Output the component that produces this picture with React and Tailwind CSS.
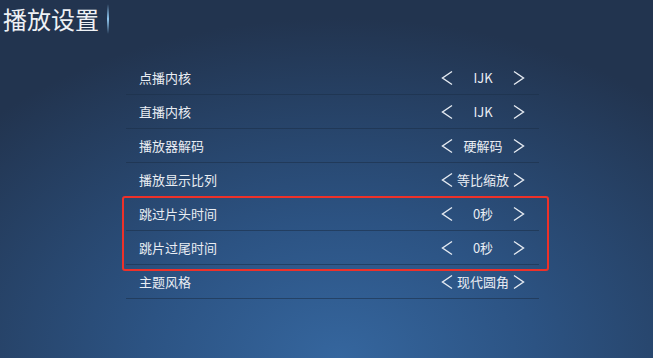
import React from 'react';

const settings = [
  { label: '点播内核', value: 'IJK' },
  { label: '直播内核', value: 'IJK' },
  { label: '播放器解码', value: '硬解码' },
  { label: '播放显示比列', value: '等比缩放' },
  { label: '跳过片头时间', value: '0秒' },
  { label: '跳片过尾时间', value: '0秒' },
  { label: '主题风格', value: '现代圆角' },
];

const Chevron = ({ dir }) => (
  <svg width="12" height="16" viewBox="0 0 12 16" className="shrink-0">
    <polyline
      points={dir === 'left' ? '11,1.5 1.5,8 11,14.5' : '1,1.5 10.5,8 1,14.5'}
      fill="none"
      stroke="#e6ebf2"
      strokeWidth="1.4"
      strokeLinejoin="miter"
    />
  </svg>
);

const SettingRow = ({ label, value }) => (
  <div className="h-[34px] flex items-center border-b border-[#1d3049]/60 pl-[13px] pr-[14px]">
    <span className="flex-1 text-[13px] text-[#e9edf3]">{label}</span>
    <div className="w-[84px] flex items-center justify-between">
      <Chevron dir="left" />
      <span className="text-[13px] text-[#e9edf3] leading-none">{value}</span>
      <Chevron dir="right" />
    </div>
  </div>
);

const App = () => {
  return (
    <div
      className="relative w-[653px] h-[358px] overflow-hidden bg-[radial-gradient(ellipse_75%_95%_at_52%_100%,#35669e_0%,#2c5383_40%,#22344f_100%)]"
      style={{ fontFamily: '"Noto Sans CJK SC", "Noto Sans", sans-serif' }}
    >
      <div className="flex items-center h-[37px] pl-[3px]">
        <h1 className="text-[24px] leading-none text-[#eef1f5]">播放设置</h1>
        <div className="ml-[8px] w-[2px] h-[30px] rounded-full bg-gradient-to-b from-transparent via-[#8fc6ee] to-transparent" />
      </div>

      <div className="ml-[126px] w-[413px] mt-[24px]">
        {settings.map((s) => (
          <SettingRow key={s.label} label={s.label} value={s.value} />
        ))}
      </div>

      <div className="absolute left-[122px] top-[196px] w-[427px] h-[75px] border-2 border-[#ee3129] rounded-[3px]" />
    </div>
  );
};

export default App;
